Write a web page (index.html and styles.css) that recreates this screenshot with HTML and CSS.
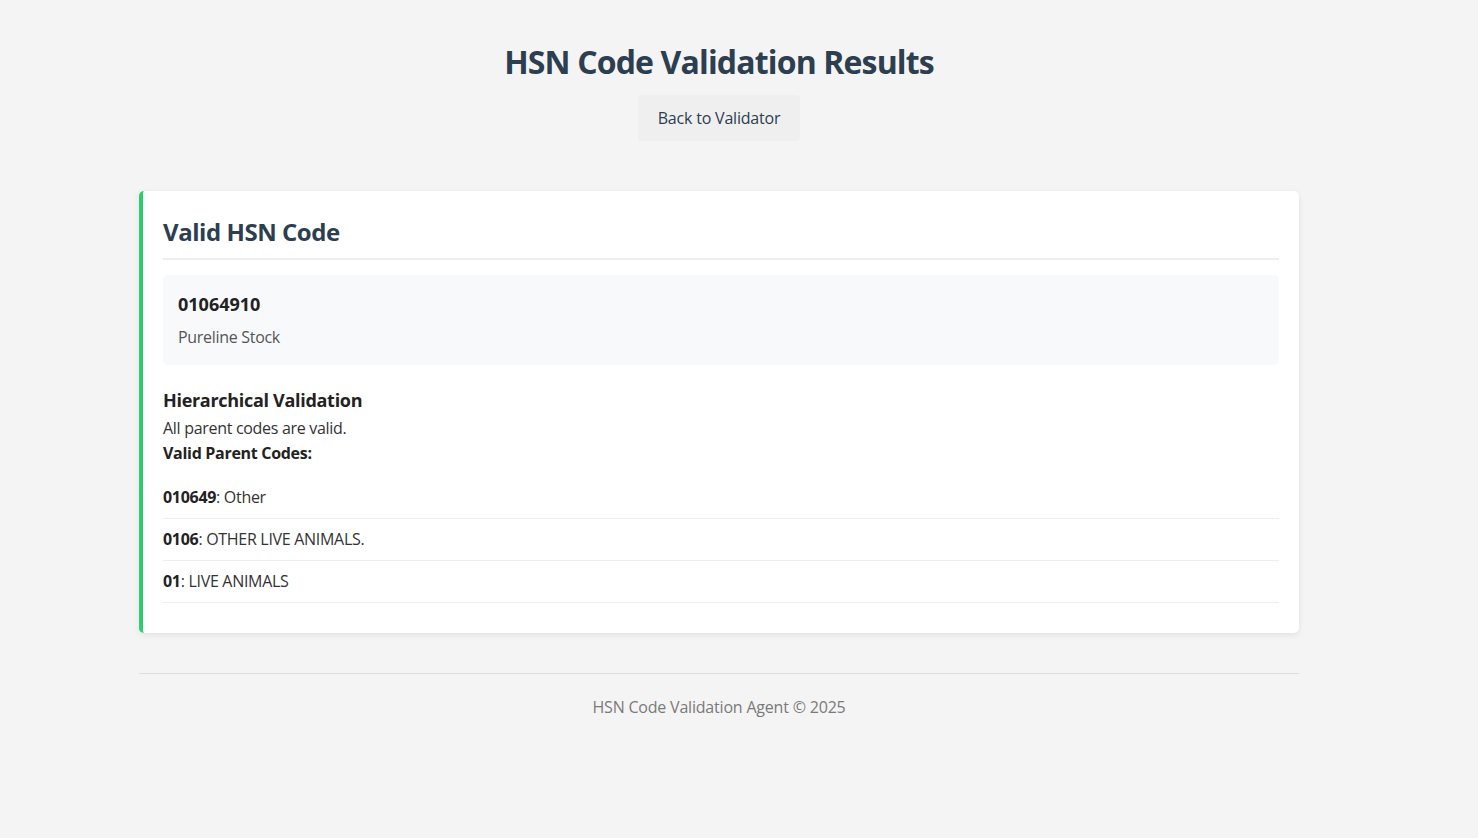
FILE: index.html
```html
<!DOCTYPE html>
<html lang="en">
<head>
<meta charset="utf-8">
<title>HSN Code Validation Results</title>
<link rel="stylesheet" href="styles.css">
</head>
<body>
<div class="container">
  <header class="header">
    <h1 class="title">HSN Code Validation Results</h1>
    <a class="back-btn" href="#">Back to Validator</a>
  </header>

  <section class="card">
    <h2 class="card-title">Valid HSN Code</h2>
    <div class="code-box">
      <div class="code">01064910</div>
      <div class="code-desc">Pureline Stock</div>
    </div>

    <h3 class="section-title">Hierarchical Validation</h3>
    <p class="status">All parent codes are valid.</p>
    <p class="list-label">Valid Parent Codes:</p>
    <ul class="parent-list">
      <li class="parent-item"><strong>010649</strong>: Other</li>
      <li class="parent-item"><strong>0106</strong>: OTHER LIVE ANIMALS.</li>
      <li class="parent-item"><strong>01</strong>: LIVE ANIMALS</li>
    </ul>
  </section>

  <footer class="footer">HSN Code Validation Agent © 2025</footer>
</div>
</body>
</html>
```

FILE: styles.css
```css
* {
  box-sizing: border-box;
}

body {
  margin: 0;
  padding-right: 40px;
  background: #f4f4f4;
  color: #333;
  font-family: "Open Sans", "Noto Sans", sans-serif;
  font-size: 16px;
  line-height: 21px;
  letter-spacing: -0.3px;
}

.container {
  width: 1160px;
  margin: 0 auto;
  padding-top: 40px;
}

.header {
  display: flex;
  flex-direction: column;
  align-items: center;
}

.title {
  margin: 0;
  font-size: 32px;
  line-height: 43px;
  font-weight: 700;
  color: #2c3e50;
  letter-spacing: -0.85px;
}

.back-btn {
  margin-top: 12px;
  display: inline-block;
  padding: 13px 20px 12px;
  background: #efefef;
  border-radius: 4px;
  color: #2c3e50;
  text-decoration: none;
  font-size: 16px;
  line-height: 21px;
  letter-spacing: -0.2px;
}

.card {
  margin-top: 50px;
  background: #fff;
  border-left: 4px solid #2ecc71;
  border-radius: 5px;
  box-shadow: 0 2px 6px rgba(0, 0, 0, 0.08);
  padding: 25px 20px 30px 20px;
}

.card-title {
  margin: 0;
  padding-bottom: 10px;
  border-bottom: 2px solid #eee;
  font-size: 24px;
  line-height: 32px;
  font-weight: 700;
  color: #2c3e50;
  letter-spacing: -0.45px;
}

.code-box {
  margin-top: 15px;
  background: #f8f9fa;
  border-radius: 5px;
  padding: 17px 15px;
}

.code {
  font-size: 18px;
  line-height: 24px;
  font-weight: 700;
  color: #222;
  letter-spacing: 0;
}

.code-desc {
  margin-top: 11px;
  color: #555;
}

.section-title {
  margin: 23px 0 0;
  font-size: 18px;
  line-height: 25px;
  font-weight: 700;
  color: #222;
  letter-spacing: -0.3px;
}

.status {
  margin: 5px 0 0;
}

.list-label {
  margin: 4px 0 0;
  font-weight: 700;
  color: #222;
}

.parent-list {
  list-style: none;
  margin: 13px 0 0;
  padding: 0;
}

.parent-item {
  padding: 10px 0;
  line-height: 21px;
  border-bottom: 1px solid #eee;
}

.parent-item strong {
  color: #222;
}

.footer {
  margin-top: 40px;
  border-top: 1px solid #ddd;
  padding-top: 23px;
  text-align: center;
  color: #7a7a7a;
  letter-spacing: -0.2px;
}
```
